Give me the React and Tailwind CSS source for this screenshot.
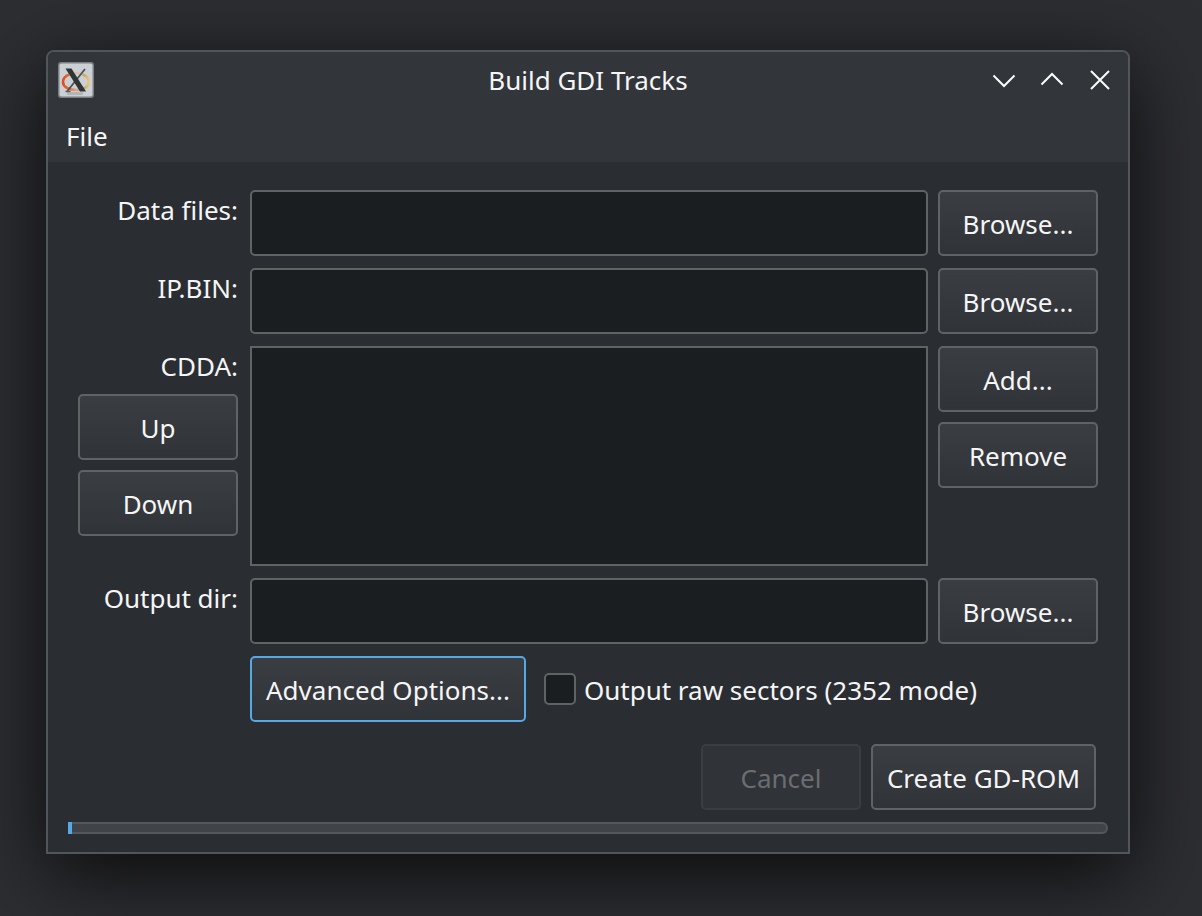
import React, { useState } from 'react';
import { clsx } from 'clsx';

function PushButton({ className, children, ...props }) {
  return (
    <button
      type="button"
      className={clsx(
        'h-[66px] shrink-0 rounded-[5px] border-2 px-[14px] pt-0.5 text-center whitespace-nowrap outline-none',
        'bg-linear-to-b from-[#3a3d41] to-[#303338] border-[#5f6366] text-[#f5f5f5]',
        'focus:border-[#55aae6] disabled:from-[#303337] disabled:to-[#303337] disabled:border-[#3a3d41] disabled:text-[#6b6e71]',
        className
      )}
      {...props}
    >
      {children}
    </button>
  );
}

function PathRow({ id, label, value, onChange }) {
  return (
    <>
      <label htmlFor={id} className="pr-0.5 text-right leading-10">{label}</label>
      <input
        id={id}
        type="text"
        value={value}
        onChange={(e) => onChange(e.target.value)}
        className="h-[66px] w-full min-w-0 rounded-[5px] border-2 border-[#5f6366] bg-[#1b1e20] px-3 outline-none focus:border-[#55aae6]"
      />
      <PushButton>Browse...</PushButton>
    </>
  );
}

function WindowButton({ label, path }) {
  return (
    <button type="button" aria-label={label} className="size-9">
      <svg viewBox="0 0 36 36" className="size-9" fill="none" stroke="#fcfcfc" strokeWidth="2">
        <path d={path} />
      </svg>
    </button>
  );
}

function AppIcon() {
  return (
    <svg viewBox="0 0 36 36" className="size-9" fill="none">
      <defs>
        <linearGradient id="ring" x1="4" x2="32" y1="0" y2="0" gradientUnits="userSpaceOnUse">
          <stop offset="0" stopColor="#e5481a" />
          <stop offset="0.2" stopColor="#e2622c" />
          <stop offset="0.5" stopColor="#dfa57c" />
          <stop offset="0.75" stopColor="#d39a4c" />
          <stop offset="1" stopColor="#e6cf8c" />
        </linearGradient>
      </defs>
      <rect x="0" y="0" width="36" height="36" rx="3" fill="#7b7f82" />
      <rect x="1.5" y="1.5" width="33" height="33" rx="2" fill="#cbd0d4" />
      <path d="M9 31.500h16" stroke="#b2b6b9" strokeWidth="3" />
      <path
        d="M11.500 12.500C7 14 5 17 5 20c0 4.500 5 8 13 8s13-3.500 13-8c0-3-2-6-6.500-7.500"
        stroke="url(#ring)"
        strokeWidth="2.6"
      />
      <path d="M14 11.500c2.500-.7 5.500-.7 8 0" stroke="#dfb69c" strokeWidth="1.6" />
      <path d="M27 7 9 29.500" stroke="#4c5053" strokeWidth="1.8" />
      <path d="M7.500 6.500h6L28 29.500h-6Z" fill="#2f3436" />
      <path d="M7.500 29.500h5" stroke="#5b5f62" strokeWidth="1.4" />
    </svg>
  );
}

export default function App() {
  const [dataDir, setDataDir] = useState('');
  const [ipBin, setIpBin] = useState('');
  const [outputDir, setOutputDir] = useState('');
  const [tracks] = useState([]);
  const [rawSectors, setRawSectors] = useState(false);

  return (
    <div className="min-h-screen bg-[#2d2e32] pt-[50px] pr-[72px] pb-[62px] pl-[46px] font-['Noto_Sans',sans-serif] text-[26px] text-[#f5f5f5]">
      <div className="overflow-hidden rounded-t-lg border-2 border-[#50565c] bg-[#2a2e32] shadow-[0_20px_80px_0_rgba(0,0,0,0.78)]">
        <header className="bg-[#32363a]">
          <div className="grid h-14 grid-cols-[1fr_auto_1fr] items-center px-[10px]">
            <AppIcon />
            <h1>Build GDI Tracks</h1>
            <div className="flex justify-end gap-3">
              <WindowButton label="Minimize" path="M7.500 13.500 18 24 28.500 13.500" />
              <WindowButton label="Maximize" path="M7.500 22.500 18 12 28.500 22.500" />
              <WindowButton label="Close" path="M9 9 27 27M27 9 9 27" />
            </div>
          </div>
          <nav className="flex h-[54px] items-center px-[18px] pt-0.5">
            <button type="button">File</button>
          </nav>
        </header>

        <main className="px-5 pt-7 pb-[18px]">
          <div className="grid grid-cols-[162px_minmax(0,1fr)_160px] items-start gap-x-[10px] gap-y-3 px-[10px]">
            <PathRow id="data" label="Data files:" value={dataDir} onChange={setDataDir} />
            <PathRow id="ipbin" label="IP.BIN:" value={ipBin} onChange={setIpBin} />

            <div className="flex flex-col pr-0.5">
              <label htmlFor="cdda" className="text-right leading-10">CDDA:</label>
              <div className="flex flex-col gap-[10px] pt-2">
                <PushButton>Up</PushButton>
                <PushButton>Down</PushButton>
              </div>
            </div>
            <select
              id="cdda"
              multiple
              className="h-[220px] w-full appearance-none rounded-none border-2 border-[#5f6366] bg-[#1b1e20] outline-none"
            >
              {tracks.map((track) => (
                <option key={track}>{track}</option>
              ))}
            </select>
            <div className="flex flex-col gap-[10px]">
              <PushButton>Add...</PushButton>
              <PushButton>Remove</PushButton>
            </div>

            <PathRow id="output" label="Output dir:" value={outputDir} onChange={setOutputDir} />

            <div className="col-span-2 col-start-2 flex items-center gap-[18px]">
              <PushButton autoFocus>Advanced Options...</PushButton>
              <div className="flex items-center gap-2">
                <input
                  id="raw"
                  type="checkbox"
                  checked={rawSectors}
                  onChange={(e) => setRawSectors(e.target.checked)}
                  className="size-8 appearance-none rounded-[5px] border-2 border-[#5f6366] bg-[#1b1e20] checked:bg-[#55aae6]"
                />
                <label htmlFor="raw" className="pt-0.5">Output raw sectors (2352 mode)</label>
              </div>
            </div>
          </div>

          <div className="mt-[22px] flex justify-end gap-[10px] pr-3">
            <PushButton disabled className="w-40">Cancel</PushButton>
            <PushButton>Create GD-ROM</PushButton>
          </div>

          <div
            role="progressbar"
            aria-label="Build progress"
            aria-valuenow={0}
            className="mt-3 flex h-3"
          >
            <div className="w-1 bg-[#55aae6]" />
            <div className="flex-1 rounded-r-md border-2 border-l-0 border-[#54585b] bg-[#404347]" />
          </div>
        </main>
      </div>
    </div>
  );
}
